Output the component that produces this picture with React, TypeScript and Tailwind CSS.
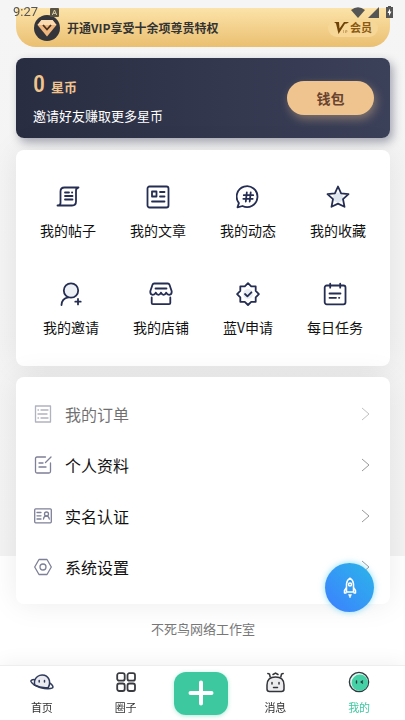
import type { ReactNode } from 'react';

type Item = { label: string; icon: ReactNode };

const line = {
  fill: 'none',
  stroke: '#252d52',
  strokeWidth: 1.8,
  strokeLinecap: 'round',
  strokeLinejoin: 'round',
} as const;

const thin = {
  fill: 'none',
  stroke: '#7d8096',
  strokeWidth: 1.3,
  strokeLinecap: 'round',
  strokeLinejoin: 'round',
} as const;

const shortcuts: Item[][] = [
  [
    {
      label: '我的帖子',
      icon: (
        <svg viewBox="0 0 24 24" className="size-6" {...line}>
          <path d="M22.500 2.500H8.500q-4 0-4 4V18q0 2.500-3 2.500H16q4 0 4-4V5.500q0-2.500 2.500-3" />
          <path d="M9 7.500h4M16 7.500h.2M9 11h7.500M9 14.500h7.500" />
        </svg>
      ),
    },
    {
      label: '我的文章',
      icon: (
        <svg viewBox="0 0 24 24" className="size-6" {...line}>
          <rect x="1.500" y="1.500" width="21" height="21" rx="2" />
          <path d="M6 6.500h4.500v5H6zM14 7h4.500M14 11.500h4.500M6 16.500h12.500" />
        </svg>
      ),
    },
    {
      label: '我的动态',
      icon: (
        <svg viewBox="0 0 24 24" className="size-6" {...line}>
          <path d="M1.500 22.300l1.400-4.200A10.400 10.400 0 1 1 6.500 21z" />
          <path d="M10.800 7.500l-1 9M14.700 7.500l-1 9M7.800 10.200h9.400M7.300 13.800h9.400" />
        </svg>
      ),
    },
    {
      label: '我的收藏',
      icon: (
        <svg viewBox="0 0 24 24" className="size-6" {...line}>
          <circle cx="12" cy="12.500" r="5" fill="#dfe6ef" stroke="none" />
          <path d="M12 1.500l3.100 6.800 7.400.9-5.500 5 1.500 7.600L12 18.600l-6.500 3.200L7 14.200l-5.500-5 7.400-.9z" />
        </svg>
      ),
    },
  ],
  [
    {
      label: '我的邀请',
      icon: (
        <svg viewBox="0 0 24 24" className="size-6" {...line}>
          <circle cx="12" cy="8.500" r="7.200" fill="#edf1f6" />
          <path d="M2.500 23q.2-6.300 6.800-7.600M19 17v5.400M16.300 19.700h5.400" />
        </svg>
      ),
    },
    {
      label: '我的店铺',
      icon: (
        <svg viewBox="0 0 24 24" className="size-6" {...line}>
          <path d="M5.200 1.500h13.600q1.300 0 1.700 1.200l2.200 6.600q.3 3.200-2.500 3.500-2 0-3-2.200-1 2.200-2.600 2.200T12 10.600q-1 2.200-2.600 2.200t-2.600-2.200q-1 2.200-3 2.200-2.800-.3-2.500-3.500l2.200-6.600q.4-1.200 1.700-1.200zM6.500 6.500h11M2.700 15.500V21q0 1.200 1.200 1.200h16.200q1.200 0 1.200-1.200v-5.500" />
        </svg>
      ),
    },
    {
      label: '蓝V申请',
      icon: (
        <svg viewBox="0 0 24 24" className="size-6" {...line}>
          <circle cx="12" cy="12" r="5" fill="#e8edf4" stroke="none" />
          <path d="M12 1.200l3.200 3.200h4.500v4.500l3.200 3.200-3.200 3.200v4.500h-4.500L12 23l-3.200-3.200H4.300v-4.500l-3.200-3.200 3.200-3.200V4.400h4.500z" />
          <path d="M9 12l2.400 2.300 4-4" />
        </svg>
      ),
    },
    {
      label: '每日任务',
      icon: (
        <svg viewBox="0 0 24 24" className="size-6" {...line}>
          <rect x="1.700" y="3.500" width="20.800" height="18.800" rx="2" />
          <path d="M7.200 1.700v4M17.200 1.700v4M6.500 11.500h11M6.500 15.800h6.500M16 15.800h.3" />
        </svg>
      ),
    },
  ],
];

const settings: (Item & { dim?: boolean })[] = [
  {
    label: '我的订单',
    dim: true,
    icon: (
      <svg viewBox="0 0 18 18" className="size-[18px]" {...thin}>
        <path d="M1.500 1h15v16h-15zM4 5h.5M7 5h7M4 9h9M4 13h.5M7 13h7" />
      </svg>
    ),
  },
  {
    label: '个人资料',
    icon: (
      <svg viewBox="0 0 18 18" className="size-[18px]" {...thin}>
        <path d="M11.500 1H3Q1.500 1 1.500 2.500v13Q1.500 17 3 17h12q1.500 0 1.500-1.500V7M17 1l-5.500 5.500M5 7h4M5 11h7" />
      </svg>
    ),
  },
  {
    label: '实名认证',
    icon: (
      <svg viewBox="0 0 18 18" className="size-[18px]" {...thin}>
        <rect x=".7" y="1.800" width="16.600" height="14" rx="1" />
        <path d="M3 5.500h4M3 8.800h4M3 12h4M9.500 12q.3-3 2.800-3t3 3" />
        <circle cx="12.500" cy="7" r="2" />
      </svg>
    ),
  },
  {
    label: '系统设置',
    icon: (
      <svg viewBox="0 0 18 18" className="size-[18px]" {...thin}>
        <path d="M5 1.500h8L17.300 9 13 16.500H5L.7 9z" />
        <circle cx="9" cy="9" r="3" />
      </svg>
    ),
  },
];

const tabs: Item[] = [
  {
    label: '首页',
    icon: (
      <svg viewBox="0 0 24 24" className="size-6" fill="none" stroke="#2f3a5c" strokeWidth="1.500" strokeLinecap="round">
        <path d="M4.500 14q-.8-5.500 3-8.500 3.200-2.300 7-1.200 4.200 1.600 5 5.700.6 3.600-1.200 6.500-7.800.7-13.800-2.500z" fill="#e9ebf0" />
        <path d="M4.300 8.500Q.5 8.700 1 10.500q1.500 3.500 9 6 8.500 2.300 12.500.4 1.500-1.700-2.500-4.700" />
        <path d="M9.200 9.500v1.500M14.500 9.500v1.500" />
      </svg>
    ),
  },
  {
    label: '圈子',
    icon: (
      <svg viewBox="0 0 24 24" className="size-6" fill="none" stroke="#3a3b40" strokeWidth="1.800">
        <rect x="3.200" y="2.200" width="7.500" height="7.500" rx="2" />
        <rect x="13.500" y="2.200" width="7.500" height="7.500" rx="2" />
        <rect x="3.200" y="12.500" width="7.500" height="7.500" rx="2" />
        <rect x="13.500" y="12.500" width="7.500" height="7.500" rx="2" />
      </svg>
    ),
  },
  {
    label: '消息',
    icon: (
      <svg viewBox="0 0 24 24" className="size-6" fill="none" stroke="#333438" strokeWidth="1.500" strokeLinecap="round">
        <path d="M4 18v-4q0-8 8.500-8t8.500 8v4q0 2.500-2.500 2.500h-12Q4 20.500 4 18z" fill="#ececef" />
        <path d="M7.200 6L6.500 3 4.800 2.500M17.800 6l.7-3 1.700-.5M10 3.500L12.500 2 15 3.500M9 11.500v1.500M16 11.500v1.500M10.500 16.500h4" />
      </svg>
    ),
  },
  {
    label: '我的',
    icon: (
      <svg viewBox="0 0 24 24" className="size-6" fill="none" stroke="#2f3a40" strokeWidth="1.400" strokeLinecap="round">
        <circle cx="12" cy="11" r="9.600" fill="#e4f7f0" />
        <circle cx="12.800" cy="11.800" r="8.200" fill="#45d1a5" stroke="none" />
        <path d="M9.500 10v2M15.500 10l-1.300 1 1.300 1" />
      </svg>
    ),
  },
];

function StatusBar() {
  return (
    <div className="fixed inset-x-0 top-0 z-20 flex h-5 items-center justify-between pt-1 pr-3 pl-[13px] text-[#555]">
      <div className="flex items-center gap-3">
        <span className="font-[Roboto,sans-serif] text-[13px] leading-4">9:27</span>
        <svg viewBox="0 0 9 9" className="size-[9px]">
          <rect width="9" height="9" rx="1" fill="#5b5341" />
          <path d="M2.300 7l2.200-5 2.200 5M3.200 5.400h2.600" fill="none" stroke="#d9cda9" />
        </svg>
      </div>
      <div className="flex items-center gap-[3px]">
        <svg viewBox="0 0 14 11" className="h-[11px] w-[14px]" fill="currentColor">
          <path d="M0 3Q7-2.500 14 3L7 11z" />
        </svg>
        <svg viewBox="0 0 11 11" className="size-[11px]" fill="currentColor">
          <path d="M11 0v11H0z" />
        </svg>
        <svg viewBox="0 0 7 12" className="ml-1 h-3 w-[7px]">
          <path d="M2 0h3v1h2v11H0V1h2z" fill="#555" />
          <path d="M4 2.500L1.500 7H3v3l2.500-4.500H4z" fill="#fff" />
        </svg>
      </div>
    </div>
  );
}

function VipBanner() {
  return (
    <a
      href="#vip"
      className="flex h-[39px] items-center justify-between rounded-b-[20px] bg-linear-to-b from-[#fce3a9] to-[#eabf70] pr-3 pl-[18px]"
    >
      <span className="flex items-center gap-[7px]">
        <svg viewBox="0 0 26 26" className="size-[26px]">
          <circle cx="13" cy="13" r="13" fill="#34353a" />
          <path d="M7.500 5h11l4 5L13 21.500 3.500 10z" fill="#eeb67c" />
          <path d="M7.500 5h11l4 5h-19z" fill="#fbdcb2" />
          <path d="M9 10l4 4.500 4-4.500" fill="none" stroke="#4a3020" strokeWidth="1.800" />
        </svg>
        <span className="text-xs font-bold text-[#333]">开通VIP享受十余项尊贵特权</span>
      </span>
      <span className="flex h-[18px] items-center gap-px rounded-full bg-[#f7d797] px-[6px] text-[#8a5a14]">
        <svg viewBox="0 0 15 13" className="h-[13px] w-[15px]">
          <path d="M0 1h5l.5 6.500L10 1h5l-2 1.500-2 .3L4.500 13 2 2.500z" fill="#6f4308" />
          <path d="M9.500 9v3M11.500 12V9.500h1.500V11h-1.500" fill="none" stroke="#c29555" strokeWidth=".7" />
        </svg>
        <span className="text-[11px] font-bold">会员</span>
      </span>
    </a>
  );
}

function Wallet() {
  return (
    <section className="mt-[11px] flex h-20 items-center justify-between rounded-lg bg-linear-to-r from-[#282d41] to-[#3c415a] pr-4 pl-[17px] shadow-[3px_4px_10px_rgba(40,45,75,0.4)]">
      <div>
        <p className="flex items-baseline gap-[6px] text-[#f1c48d]">
          <span className="font-['Liberation_Sans_Narrow','Roboto_Condensed',Roboto,sans-serif] text-2xl leading-7 font-medium">0</span>
          <span className="text-[13px] font-bold">星币</span>
        </p>
        <p className="mt-2 text-[13px] leading-5 text-white">邀请好友赚取更多星币</p>
      </div>
      <button className="h-[34px] w-[87px] rounded-full bg-[#efc48e] text-sm font-bold text-[#68432f] shadow-[2px_4px_10px_rgba(239,196,142,0.4)]">
        钱包
      </button>
    </section>
  );
}

function Shortcuts() {
  return (
    <section className="mt-3 flex flex-col gap-[42px] rounded-lg bg-white pt-[35px] pb-[29px] shadow-[0_0_30px_rgba(0,0,0,0.08)]">
      {shortcuts.map((row, i) => (
        <div key={i} className="flex justify-center gap-[34px]">
          {row.map((item) => (
            <a key={item.label} href="#" className="flex flex-col items-center gap-[11px] text-sm text-[#111]">
              {item.icon}
              <span>{item.label}</span>
            </a>
          ))}
        </div>
      ))}
    </section>
  );
}

function Settings() {
  return (
    <section className="mt-[11px] rounded-lg bg-white pt-[11px] pb-3 shadow-[0_0_30px_rgba(0,0,0,0.08)]">
      {settings.map((item) => (
        <a
          key={item.label}
          href="#"
          className={`flex h-[51px] items-center gap-[13px] pr-5 pl-[18px] text-base text-[#111] ${item.dim ? 'opacity-60' : ''}`}
        >
          {item.icon}
          <span className="flex-1">{item.label}</span>
          <svg viewBox="0 0 9 14" className="h-[14px] w-[9px]" fill="none" stroke="#999">
            <path d="M1 1l7 6-7 6" />
          </svg>
        </a>
      ))}
    </section>
  );
}

function Tab({ item, active }: { item: Item; active?: boolean }) {
  return (
    <a
      href="#"
      className={`flex flex-1 flex-col items-center gap-1 text-[11px] leading-4 ${active ? 'text-[#3dc8a0]' : 'text-[#333]'}`}
    >
      {item.icon}
      <span>{item.label}</span>
    </a>
  );
}

function TabBar() {
  return (
    <nav className="fixed inset-x-0 bottom-0 z-10 flex h-[55px] items-center border-t border-[#eee] bg-white pr-1 shadow-[0_-2px_20px_rgba(0,0,0,0.06)]">
      <Tab item={tabs[0]} />
      <Tab item={tabs[1]} />
      <div className="flex w-[66px] justify-center">
        <button
          aria-label="发布"
          className="flex h-[43px] w-[54px] items-center justify-center rounded-xl bg-[#3dc8a0] shadow-[0_1px_4px_rgba(61,200,160,0.4)]"
        >
          <svg viewBox="0 0 26 26" className="size-[26px]" stroke="#fff" strokeWidth="4" strokeLinecap="round">
            <path d="M13 2.500v21M2.500 13h21" />
          </svg>
        </button>
      </div>
      <Tab item={tabs[2]} />
      <Tab item={tabs[3]} active />
    </nav>
  );
}

export default function App() {
  return (
    <div className="min-h-screen overflow-x-hidden bg-[linear-gradient(#f5f5f5_0,#f3f3f3_556px,#fff_556px)] font-['Noto_Sans_CJK_SC',sans-serif]">
      <StatusBar />
      <main className="pt-2 pr-[15px] pb-20 pl-4">
        <VipBanner />
        <Wallet />
        <Shortcuts />
        <Settings />
        <p className="mt-[15px] text-center text-[13px] leading-5 text-[#777]">不死鸟网络工作室</p>
      </main>
      <button
        aria-label="发射"
        className="fixed right-[31px] bottom-[108px] z-10 flex size-[49px] items-center justify-center rounded-full bg-linear-to-tr from-[#3d7dff] to-[#2bb5e8] shadow-[0_0_6px_rgba(60,200,240,0.6)]"
      >
        <svg viewBox="0 0 14 22" className="h-[22px] w-[14px]" fill="none" stroke="#fff" strokeWidth="1.500" strokeLinejoin="round">
          <path d="M3.500 15V7Q4 3 7 1.200 10 3 10.500 7v8zM3.500 10.500L1.500 13.500V16h2M10.500 10.500l2 3V16h-2" />
          <circle cx="7" cy="7.500" r="1.500" />
          <path d="M5.500 17.500h3L7 21z" fill="#fff" strokeWidth=".5" />
        </svg>
      </button>
      <TabBar />
    </div>
  );
}
